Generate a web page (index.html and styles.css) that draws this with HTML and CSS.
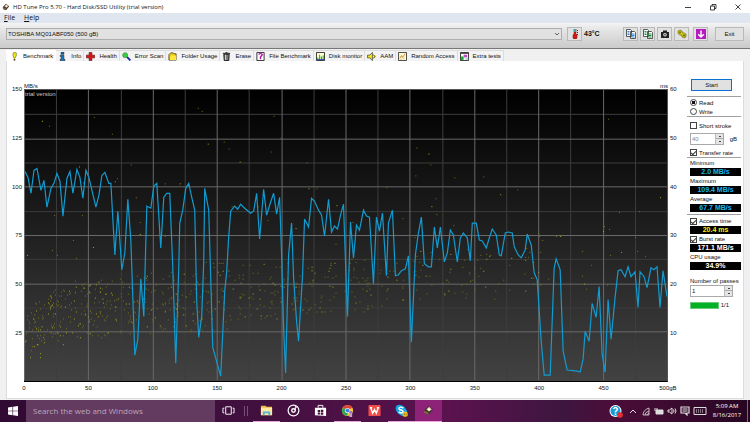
FILE: index.html
```html
<!DOCTYPE html>
<html lang="en">
<head>
<meta charset="utf-8">
<title>HD Tune Pro 5.70 - Hard Disk/SSD Utility (trial version)</title>
<link rel="stylesheet" href="styles.css">
</head>
<body>
<svg class="defs" aria-hidden="true">
  <symbol id="drive" viewBox="0 0 10 10"><path d="M1 5 5 1l4 3-4 5-3-1z" fill="#3b3230"/><path d="M3 4 5.500 1.500 8 4 5.500 6z" fill="#e2c7a0"/><path d="M1 5l4 2v2L1 7z" fill="#8d6544"/><circle cx="5.500" cy="4" r="1" fill="#fff"/></symbol>
  <symbol id="pages" viewBox="0 0 10 10"><path d="M.5.5h4l1 1v6h-5zM4.500 2.500h4l1 1v6h-5z" fill="#fff" stroke="#333" stroke-width=".8"/><path d="M1.500 2.500h2M1.500 4h2M1.500 5.500h2M5.500 5h3M5.500 6.500h3M5.500 8h3" stroke="currentColor"/></symbol>
</svg>
<header class="titlebar">
  <svg class="app-icon"><use href="#drive"/></svg>
  <h1>HD Tune Pro 5.70 - Hard Disk/SSD Utility (trial version)</h1>
  <div class="window-buttons">
    <button aria-label="Minimize"><svg viewBox="0 0 8 8"><path d="M1 4.500h6"/></svg></button>
    <button aria-label="Restore"><svg viewBox="0 0 8 8"><path d="M1.500 3h4v4h-4zM3 3V1.500h4v4H5.500"/></svg></button>
    <button aria-label="Close"><svg viewBox="0 0 8 8"><path d="m1.500 1.500 5 5m0-5-5 5"/></svg></button>
  </div>
</header>
<nav class="menu"><a href="#"><u>F</u>ile</a><a href="#"><u>H</u>elp</a></nav>
<div class="toolbar">
  <div class="drive">
    <select aria-label="Drive"><option>TOSHIBA MQ01ABF050 (500 gB)</option></select>
    <svg viewBox="0 0 6 4"><path d="m1 1 2 2 2-2"/></svg>
  </div>
  <button class="tool" aria-label="Temperature"><svg viewBox="0 0 10 10"><path d="M4 0h2v5l1 1v3l-1 1H4L3 9V6l1-1z" fill="#d51616" stroke="#6b1111" stroke-width=".5"/><path d="M4 0h2v3H4z" fill="#46a4a4"/><path d="M7.500 1v5" stroke="#333" stroke-dasharray="1 1"/></svg></button>
  <strong class="temp">43°C</strong>
  <div class="tools">
    <button class="tool" aria-label="Copy text"><svg class="blue"><use href="#pages"/></svg></button>
    <button class="tool" aria-label="Copy image"><svg class="green"><use href="#pages"/></svg></button>
    <button class="tool" aria-label="Save screenshot"><svg viewBox="0 0 10 10"><path d="M1 3h2V1.500h4V3h2v6H1z" fill="#222"/><circle cx="5" cy="5.800" r="1.800" fill="#ddd"/><circle cx="5" cy="5.800" r=".8" fill="#222"/></svg></button>
    <button class="tool" aria-label="Options"><svg viewBox="0 0 10 10"><path d="M1 2l2-1 2 1v1l2 1 2 1v3L7 9 5 8V6.500L3 6 1 4.500z" fill="#c9c614" stroke="#666209" stroke-width=".6"/><circle cx="3" cy="3.300" r=".9" fill="#66640c"/><circle cx="7" cy="6.500" r="1" fill="#66640c"/></svg></button>
  </div>
  <button class="tool" aria-label="Download"><svg viewBox="0 0 10 10"><path d="M0 0h10v10H0z" fill="#b61bc0"/><path d="M5 1.500V8M2.200 5.200 5 8l2.800-2.800" fill="none" stroke="#fff" stroke-width="1.400"/></svg></button>
  <button class="exit">Exit</button>
</div>
<main>
  <nav class="tabs">
    <a href="#" class="active"><svg viewBox="0 0 10 10"><path d="M3.500 1 5 .3l2 .7v3L5.500 7h-1L3.300 4z" fill="#f2e911" stroke="#55500b" stroke-width=".6"/><circle cx="5" cy="8.700" r="1.100" fill="#5b560a"/></svg>Benchmark</a>
    <a href="#"><svg viewBox="0 0 10 10"><path d="M3.500 0h3v2.500h-3zM2.500 3.500h4V8h1v1.800h-5V8h1V5h-1z" fill="#1878c8" stroke="#111" stroke-width=".6"/></svg>Info</a>
    <a href="#"><svg viewBox="0 0 10 10"><path d="M3.500.5h3v3h3v3h-3v3h-3v-3h-3v-3h3z" fill="#d91616" stroke="#5d0b0b" stroke-width=".7"/></svg>Health</a>
    <a href="#"><svg viewBox="0 0 10 10"><path d="m5.500 5.500 3.800 3.800" stroke="#1b24b4" stroke-width="2"/><circle cx="3.500" cy="3.500" r="2.800" fill="#35d33a" stroke="#567a59" stroke-width=".7"/></svg>Error Scan</a>
    <a href="#"><svg viewBox="0 0 10 10"><path d="M1 3l2-2h3l1 1h2v7H1z" fill="#e8ca16" stroke="#322d08" stroke-width=".8"/><path d="M3 4h6v5H2z" fill="#ffe53e"/></svg>Folder Usage</a>
    <a href="#"><svg viewBox="0 0 10 10"><path d="M2 2.500h6L7.500 9.500h-5z" fill="#777" stroke="#111"/><path d="M1 1.500h8M4 .7h2" stroke="#111"/><path d="M4 3v6" stroke="#ddd"/></svg>Erase</a>
    <a href="#"><svg viewBox="0 0 10 10"><path d="M1 .5h8v9H1z" fill="#fff" stroke="#222"/><path d="M3 3q2-3 4 0L5 5.500V8" fill="none" stroke="#b51bad" stroke-width="1.600"/></svg>File Benchmark</a>
    <a href="#"><svg viewBox="0 0 10 10"><path d="M.5.5h9v9h-9z" fill="#ffffce" stroke="#222"/><path d="M2 9V6m2 3V3m2 6V5m2 4V4" stroke="#18b928" stroke-width="1.200"/><path d="M1 8.500h8" stroke="#1939d2"/></svg>Disk monitor</a>
    <a href="#"><svg viewBox="0 0 10 10"><path d="M.5 3.500H3l3-3v9l-3-3H.5z" fill="#eee21d" stroke="#222" stroke-width=".7"/><path d="m7 3 2 2-2 2" fill="none" stroke="#837b0c" stroke-width="1.200"/></svg>AAM</a>
    <a href="#"><svg viewBox="0 0 10 10"><path d="M.5.5h9v9h-9z" fill="#fff8cf" stroke="#333"/><path d="m2 7 2-3 1 2 3-4M3 8h1m2-1h1" fill="none" stroke="#ba873b"/></svg>Random Access</a>
    <a href="#"><svg viewBox="0 0 10 10"><path d="M.5.5h9v9h-9z" fill="#fff" stroke="#222"/><path d="M1 1.500h8" stroke="#222"/><path d="M1 5h3v4H1z" fill="#18a92a"/><path d="M4 3h4v3H4z" fill="#c04ac0"/><path d="M6 6h3v3H6z" fill="#b7d9df"/></svg>Extra tests</a>
  </nav>
  <section class="panel">
    <div class="chart">
      <div class="units"><span>MB/s</span><span>ms</span></div>
      <div class="axis left"><span>150</span><span>125</span><span>100</span><span>75</span><span>50</span><span>25</span></div>
      <div class="plot">
        <svg viewBox="24 89 644 293" preserveAspectRatio="none" role="img" aria-label="Transfer rate and access time over disk position">
          <path id="minor"/><path id="major"/><path id="dim"/><path id="bright"/>
          <polyline points="25,171 28,177 31,193 34,170 37,168 41,190 44,180 47,207 51,188 54,183 57,173 60,181 63,216 67,178 70,171 73,193 77,169 80,177 83,198 86,170 89,177 96,207 99,195 102,175 105,172 109,183 111,183 115,255 118,211 122,270 125,253 128,199 131,240 135,356 138,340 141,279 144,317 147,206 151,208 154,186 157,183 161,248 164,197 167,193 170,193 173,268 176,364 179,268 180,223 183,210 186,188 189,183 192,197 195,210 197,302 199,338 202,317 204,262 205,188 209,210 211,278 213,348 221,377 225,292 227,272 229,237 231,211 235,206 238,209 241,204 245,208 251,213 254,211 257,193 260,239 264,189 267,215 270,205 274,193 277,214 280,197 282,255 284,328 286,374 289,255 292,223 294,278 297,322 299,342 303,275 305,219 309,227 312,198 315,201 319,210 322,215 325,236 329,199 332,232 335,226 338,229 341,215 344,204 346,262 348,317 351,222 354,258 357,225 360,230 364,210 367,216 370,217 374,284 377,217 380,231 383,213 387,276 389,223 393,210 396,276 399,275 402,271 406,269 409,256 412,343 416,255 419,233 422,217 425,264 429,267 432,267 435,227 438,248 441,227 445,262 448,253 451,230 454,235 458,262 461,238 464,233 468,238 471,261 473,223 477,223 480,240 483,241 487,248 490,238 493,229 497,235 500,255 502,256 506,233 509,232 513,233 515,247 519,255 522,258 526,250 528,234 532,245 535,273 538,280 542,342 545,376 551,376 555,268 557,259 561,270 564,352 568,371 578,372 581,373 584,360 586,332 590,342 593,304 597,318 600,287 603,355 606,373 609,300 612,340 616,298 619,271 622,270 626,277 629,267 632,277 636,272 639,308 641,272 645,277 648,288 652,268 655,270 658,267 661,308 664,271 668,297"/>
        </svg>
        <span class="trial">trial version</span>
      </div>
      <div class="axis right"><span>60</span><span>50</span><span>40</span><span>30</span><span>20</span><span>10</span></div>
      <div class="axis bottom"><span>0</span><span>50</span><span>100</span><span>150</span><span>200</span><span>250</span><span>300</span><span>350</span><span>400</span><span>450</span><span>500gB</span></div>
    </div>
    <form class="side">
      <button type="button" class="start">Start</button>
      <div class="group">
        <label><input type="radio" name="mode" checked>Read</label>
        <label><input type="radio" name="mode">Write</label>
      </div>
      <div class="group stroke">
        <label><input type="checkbox">Short stroke</label>
        <div class="row"><span class="spin"><input type="text" value="40" aria-label="Short stroke size" disabled><i></i></span><span>gB</span></div>
        <label><input type="checkbox" checked>Transfer rate</label>
      </div>
      <div class="group results">
        <span>Minimum</span><output class="rate">2.0 MB/s</output>
        <span>Maximum</span><output class="rate">109.4 MB/s</output>
        <span>Average</span><output class="rate">67.7 MB/s</output>
      </div>
      <div class="group results more">
        <label><input type="checkbox" checked>Access time</label><output class="access">20.4 ms</output>
        <label><input type="checkbox" checked>Burst rate</label><output>171.1 MB/s</output>
        <span>CPU usage</span><output>34.9%</output>
      </div>
      <label class="passes-label" for="passes">Number of passes</label>
      <span class="spin wide"><input type="text" id="passes" value="1"><i></i></span>
      <div class="row done"><span class="bar"></span><span>1/1</span></div>
    </form>
  </section>
</main>
<footer class="taskbar">
  <button class="windows" aria-label="Start menu"><svg viewBox="0 0 10 10"><path d="M0 1.500 4.500.8v3.900H0zM5.100.7 10 0v4.700H5.100zM0 5.300h4.500v3.900L0 8.500zM5.100 5.300H10V10l-4.900-.7z" fill="#fff"/></svg></button>
  <input class="search" type="search" placeholder="Search the web and Windows" aria-label="Search the web and Windows">
  <button class="app" aria-label="Task view"><svg viewBox="0 0 14 14"><path d="M4 3h6v8H4zM2.500 4.500H1v5h1.500M11.500 4.500H13v5h-1.500" fill="none" stroke="#fff"/></svg></button>
  <span class="grip"></span>
  <button class="app open" aria-label="File Explorer"><svg viewBox="0 0 14 14"><path d="M1 2h5l1 1h6v9H1z" fill="#e9bd45"/><path d="M1 4h12v8H1z" fill="#ffe9a0"/><path d="M3 8h8v4H9v-2H5v2H3z" fill="#4db3df"/></svg></button>
  <button class="app" aria-label="Groove"><svg viewBox="0 0 14 14"><circle cx="7" cy="7" r="5.800" fill="none" stroke="#fff" stroke-width="1.300"/><circle cx="7" cy="7" r="1.900" fill="none" stroke="#fff" stroke-width="1.500"/><path d="M9 7V2.500l2 1.500" fill="none" stroke="#fff"/></svg></button>
  <button class="app" aria-label="Store"><svg viewBox="0 0 14 14"><path d="M1 4h12v9l-12-1z" fill="#fff"/><path d="M4.500 4V1.500h5V4" fill="none" stroke="#fff"/><path d="M4 6.500h2.500v2H4zM7.300 6.200H10v2.300H7.300zM4 9.200h2.500v2H4zM7.300 9.200H10v2.300H7.300z" fill="#42103f"/></svg></button>
  <button class="app open" aria-label="Chrome"><svg viewBox="0 0 14 14"><circle cx="7" cy="7" r="6" fill="#f8cd31"/><path d="M7 7 1.800 4A6 6 0 0 1 12.200 4z" fill="#df4538"/><path d="M7 7 1.800 4A6 6 0 0 0 7 13z" fill="#31a354"/><circle cx="7" cy="7" r="2.800" fill="#fff"/><circle cx="7" cy="7" r="2.200" fill="#4182ed"/><circle cx="10.500" cy="9" r="1.800" fill="#9c74cc"/><path d="M9 10h3v4H9z" fill="#bda0dc"/></svg></button>
  <button class="app" aria-label="WPS Writer"><svg viewBox="0 0 14 14"><rect x=".5" y="1" width="13" height="12" rx="1" fill="#f04b45"/><path d="m3 4 2 6 2-4 2 4 2-6M2 4h2.500m5 0H12" fill="none" stroke="#fff" stroke-width="1.500"/></svg></button>
  <button class="app open" aria-label="Skype"><svg viewBox="0 0 14 14"><circle cx="4.500" cy="4.500" r="3.800" fill="#12a5e8"/><circle cx="8.500" cy="8.500" r="4.500" fill="#12a5e8"/><circle cx="6.500" cy="6.500" r="5" fill="#12a5e8"/><path d="M9 4.500Q6.500 2.500 4.500 4q-1 2 2 2.500 3 .7 2 2.500-2 1.500-4.500-.5" fill="none" stroke="#fff" stroke-width="1.500"/><circle cx="11" cy="11" r="2.800" fill="#f1bb20"/><path d="M10 10.500v1m2-1v1" stroke="#614400"/></svg></button>
  <button class="app open current" aria-label="HD Tune Pro"><svg><use href="#drive"/></svg></button>
  <div class="tray">
    <svg class="help" viewBox="0 0 14 14"><circle cx="6.500" cy="7" r="6" fill="#fff"/><circle cx="6.500" cy="7" r="5" fill="#179bd7"/><path d="M4.500 5q2-3 4 0 0 1-2 2.500V8.500m0 1v1.500" fill="none" stroke="#fff" stroke-width="1.500"/><circle cx="11" cy="11" r="2.800" fill="#e42f2c"/></svg>
    <svg viewBox="0 0 10 10"><path d="m2 7 3-3 3 3"/></svg>
    <svg viewBox="0 0 10 10"><path d="M2 9q0-5 6-7M4 9q0-3 4-4M6 9q0-1 2-2M8 2v7H2" stroke-width=".8"/></svg>
    <svg viewBox="0 0 10 10"><path d="M2 4h7v4H2z" fill="#ddd"/><path d="M1 2v3m2-3v2"/></svg>
    <svg viewBox="0 0 10 10"><path d="M1 4h1.500L5 2v6L2.500 6H1zM6.500 3.500q1 1.500 0 3M8 2.500q2 2.500 0 5"/></svg>
    <svg viewBox="0 0 10 10"><path d="M1 1h8v6H7v2L5 7H1zM2.500 3h5m-5 2h5" stroke-width="1.200"/></svg>
    <svg class="keys" viewBox="0 0 14 10"><path d="M1 1.500h12v7H1z"/><path d="M3 4h8M3 6h8" stroke-dasharray="1 1"/></svg>
    <time datetime="2017-08-16T05:09"><span>5:09 AM</span><span>8/16/2017</span></time>
    <span class="desktop"></span>
  </div>
</footer>
<script src="chart.js"></script>
</body>
</html>
```
FILE: styles.css
```css
* { box-sizing: border-box; }
body {
  margin: 0;
  min-height: 100vh;
  display: flex;
  flex-direction: column;
  background: #f0f0f0;
  color: #111;
  font: 6px/8px "Liberation Sans", sans-serif;
}
button, input, select { font: inherit; color: inherit; margin: 0; padding: 0; border: 0; border-radius: 0; }
a { color: inherit; text-decoration: none; }
svg { display: block; flex: none; }
.defs { position: absolute; width: 0; height: 0; }

.titlebar { display: flex; align-items: center; height: 13px; padding-left: 2px; background: #fff; gap: 3px; }
.titlebar h1 { margin: 0; flex: 1; font: 6px/12px "Open Sans", sans-serif; }
.app-icon { width: 8px; height: 8px; }
.window-buttons { display: flex; }
.window-buttons button { width: 25px; height: 12px; display: grid; place-items: center; background: none; }
.window-buttons svg { width: 8px; height: 8px; fill: none; stroke: #111; stroke-width: 0.8; }

.menu { display: flex; gap: 9px; height: 10px; padding-left: 4px; background: #dfe6f0; font: 7px/10px "Open Sans", sans-serif; }

.toolbar {
  display: flex;
  align-items: center;
  height: 26px;
  padding: 0 6px 3px;
  background: linear-gradient(#f3f3f3, #e4e4e4 30%, #cacaca);
  border-bottom: 1px solid #777;
}
.drive { flex: 1; display: grid; align-items: center; margin-right: 5px; }
.drive select { grid-area: 1 / 1; width: 100%; height: 12px; padding: 0 1px; appearance: none; background: #e1e1e1; border: 1px solid #adadad; }
.drive svg { grid-area: 1 / 1; justify-self: end; width: 6px; height: 4px; margin-right: 2px; fill: none; stroke: #444; stroke-width: 0.8; pointer-events: none; }
.tool, .exit { background: #e1e1e1; border: 1px solid #b9b9b9; height: 14px; }
.tool { width: 15px; display: grid; place-items: center; }
.tool svg { width: 10px; height: 10px; }
.temp { width: 41px; padding-left: 2px; font-size: 7px; }
.tools { display: flex; gap: 2px; margin-right: 4px; }
.blue { color: #2a83d4; }
.green { color: #15983a; }
.exit { width: 29px; margin-left: 7px; }

main { flex: 1; display: flex; flex-direction: column; padding: 1px 6px 1px 6px; }
.tabs { display: flex; height: 11px; }
.tabs a { display: flex; align-items: center; gap: 4px; padding: 0 2px; border: 1px solid #ddd; border-bottom: 0; border-left: 0; background: #f3f3f3; white-space: nowrap; }
.tabs .active { padding-left: 4px; background: #fff; border-color: #fff; }
.tabs svg { width: 9px; height: 9px; }
.panel { flex: 1; display: flex; background: #fff; border: 1px solid #dcdcdc; border-top: 0; }

.chart { flex: 1; display: grid; grid-template: 28px 1fr 16px / 17px 1fr 19px; }
.units { grid-area: 1 / 2; display: flex; justify-content: space-between; align-items: flex-end; line-height: 6px; }
.axis.left, .axis.right { display: grid; grid-template-rows: repeat(6, 1fr); line-height: 8px; }
.axis.left span, .axis.right span { margin-top: -4px; }
.axis.left { grid-area: 2 / 1; text-align: right; padding-right: 2px; }
.axis.right { grid-area: 2 / 3; padding-left: 2px; }
.plot { grid-area: 2 / 2; display: grid; min-height: 200px; background: linear-gradient(#000, #202020 50%, #424242); border: solid #555; border-width: 1px 1px 0 0; border-bottom: 1px solid #000; }
.plot svg { grid-area: 1 / 1; width: 100%; height: 100%; min-height: 0; contain: size; fill: none; }
.trial { grid-area: 1 / 1; align-self: start; padding-left: 1px; color: #c8c8c8; }
#minor { stroke: #3d3d3d; }
#major { stroke: #6a6a6a; }
#dim { stroke: #77751b; }
#bright { stroke: #aaa818; }
polyline { stroke: #129bd0; stroke-width: 1.2; }
.axis.bottom { grid-area: 3 / 2; display: flex; justify-content: space-between; padding-top: 2px; }
.axis.bottom span { width: 0; display: flex; justify-content: center; }

.side { width: 54px; margin-right: 2px; padding-top: 18px; display: flex; flex-direction: column; white-space: nowrap; }
.start { width: 41px; height: 12px; margin: 0 0 5px 4px; background: #e1e1e1; border: 1px solid #0871d2; }
.group { display: flex; flex-direction: column; border-top: 1px solid #a0a0a0; padding: 1px 0 0 3px; }
.group label { display: flex; align-items: center; gap: 2px; height: 9px; }
.stroke { gap: 3px; padding-top: 4px; }
.side input[type="radio"], .side input[type="checkbox"] { appearance: none; width: 7px; height: 7px; border: 1px solid #444; background: #fff; }
.side input[type="radio"] { border-radius: 50%; }
.side input[type="radio"]:checked { background: radial-gradient(#111 40%, #fff 50%); }
.side input[type="checkbox"] { display: grid; place-items: center; }
.side input[type="checkbox"]:checked::before { content: ""; width: 4px; height: 2px; border: solid #333; border-width: 0 0 1px 1px; transform: rotate(-45deg); }
.row { display: flex; align-items: center; justify-content: space-between; padding-right: 4px; }
.spin { display: flex; width: 34px; height: 12px; border: 1px solid #aaa; background: #fff; }
.spin input { flex: 1; min-width: 0; padding-left: 1px; background: none; }
.spin input:disabled { color: #888; }
.spin i { width: 8px; border-left: 1px solid #bbb; background: linear-gradient(#444, #444) 3px 2px / 2px 1px no-repeat, linear-gradient(#444, #444) 3px 7px / 2px 1px no-repeat, linear-gradient(#e5e5e5 4px, #aaa 4px 5px, #e5e5e5 5px); }
.results { padding-top: 0; }
.results > span, .results label { height: 10px; line-height: 10px; }
output { display: block; height: 8px; width: 51px; background: #000; color: #fff; text-align: center; font-weight: bold; font-size: 7px; line-height: 8px; }
.rate { color: #18b6f2; }
.access { color: #f2f216; }
.more { margin-top: 2px; padding-top: 1px; }
.passes-label { margin: 7px 0 0 3px; }
.spin.wide { width: 43px; margin-left: 3px; }
.done { margin: 4px 8px 0 3px; }
.bar { width: 29px; height: 7px; background: #06b025; border: 1px solid #6dc97d; }

.taskbar { height: 22px; display: flex; color: #fff; background: linear-gradient(90deg, #300a32, #42103f 35%, #5b124e 60%, #3d163f 75%, #4b0d39 82%, #260622); }
.taskbar button { display: grid; place-items: center; background: none; }
.windows { width: 26px; }
.windows svg { width: 10px; height: 10px; }
.search { width: 189px; padding: 0 7px; background: #633a60; font: 8px/20px "Open Sans", sans-serif; appearance: none; }
.search::placeholder { color: #bba7ba; opacity: 1; }
.taskbar .app { width: 27px; border-bottom: 1px solid transparent; }
.app svg { width: 13px; height: 13px; }
.taskbar .open { border-bottom-color: #e9a5df; }
.taskbar .current { background: #8d2278; }
.current svg { width: 11px; height: 11px; }
.grip { width: 4px; height: 10px; margin: 6px 5px 0 2px; border: solid #745072; border-width: 0 1px; }
.tray { margin-left: auto; display: flex; align-items: center; gap: 3px; }
.tray svg { width: 10px; height: 10px; fill: none; stroke: #ddd; }
.tray .help { width: 14px; height: 14px; stroke: none; margin-right: 2px; }
.tray .keys { width: 14px; }
.tray time { width: 34px; display: flex; flex-direction: column; align-items: center; font: 6px/9px "Open Sans", sans-serif; }
.desktop { width: 3px; height: 22px; border-left: 1px solid #84617f; }
```
FILE: chart.js
```js
const box = { left: 24, top: 89, right: 668, bottom: 381 };
const columns = 20;
const rows = 12;
const lines = { major: "", minor: "" };
for (let i = 0; i <= columns; i++) {
  const x = Math.round(box.left + (box.right - box.left) * i / columns) + 0.5;
  lines[i % 2 ? "minor" : "major"] += `M${x} ${box.top}V${box.bottom}`;
}
for (let i = 1; i < rows; i++) {
  const y = Math.round(box.top + (box.bottom - box.top) * i / rows) + 0.5;
  lines[i % 2 ? "minor" : "major"] += `M${box.left} ${y}H${box.right}`;
}
document.getElementById("minor").setAttribute("d", lines.minor);
document.getElementById("major").setAttribute("d", lines.major);

// Slow seeks, well outside the main access-time band.
const outliers = [
  [42,120],[49,125],[94,116],[112,133],[79,166],[131,164],[198,107],[202,110],[208,143],[224,141],
  [229,148],[117,178],[115,181],[83,182],[136,197],[165,183],[180,183],[54,215],[82,215],[140,222],
  [140,234],[165,236],[151,211],[271,151],[240,161],[274,115],[281,137],[307,162],[309,188],[317,188],
  [387,187],[417,147],[429,153],[431,164],[416,175],[436,198],[432,206],[437,214],[403,218],[415,237],
  [337,205],[232,206],[258,206],[268,220],[296,228],[353,222],[455,177],[484,176],[501,194],[518,189],
  [454,225],[609,118],[661,197],[640,211],[620,212],[605,226],[604,231],[610,229],[636,237],[557,236],
  [561,236],[539,233],[540,236],[73,240],[93,247],[52,250],[76,258],[57,255],[27,255],[336,244],
  [583,251],[583,276],[585,284],[587,289],[592,265],[611,255],[622,252],[638,251],[646,256],[608,285]
];
// Main band: from, to, top, bottom, count.
const bands = [
  [25,45,312,360,35],[34,60,290,338,40],[50,75,289,345,50],[75,110,280,340,85],
  [110,150,276,335,60],[150,205,270,332,85],[205,230,260,330,35],[230,282,264,320,65],
  [282,330,262,316,50],[330,375,257,312,45],[375,418,256,308,24],[418,470,250,300,28],
  [465,495,245,300,20],[495,550,238,292,24]
];
let seed = 20;
const random = () => (seed = (seed * 16807) % 2147483647) / 2147483647;
const dots = [...outliers];
for (const [from, to, top, bottom, count] of bands) {
  for (let i = 0; i < count; i++) {
    dots.push([
      Math.round(from + random() * (to - from)),
      Math.round(top + random() * (bottom - top))
    ]);
  }
}
const marks = { dim: "", bright: "" };
dots.forEach(([x, y], i) => {
  marks[i % 4 ? "dim" : "bright"] += `M${x} ${y + 0.5}h1`;
});
document.getElementById("dim").setAttribute("d", marks.dim);
document.getElementById("bright").setAttribute("d", marks.bright);
```
